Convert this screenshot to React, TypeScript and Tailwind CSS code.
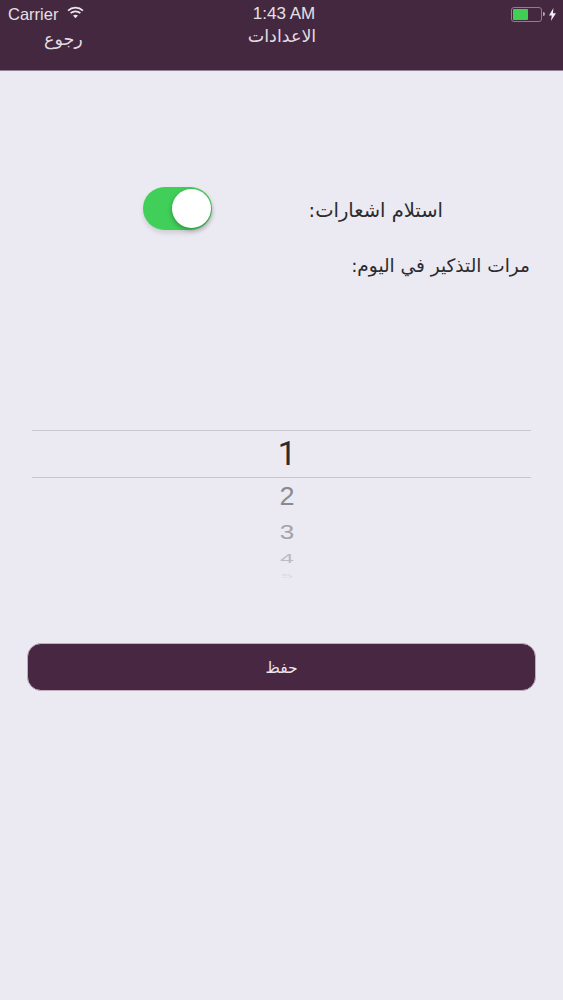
import React from "react";

const arabic = { fontFamily: '"DejaVu Sans", sans-serif' };

function Wifi() {
  return (
    <svg className="-mt-[3px]" width="17" height="13" viewBox="0 0 16 12" fill="none" stroke="#ece6ec" strokeWidth="1.7">
      <path d="M1 4.2C5 .6 11 .6 15 4.2" />
      <path d="M3.4 6.6C6 4.4 10 4.4 12.6 6.6" />
      <path d="M8 11.5L5.7 8.9C7 7.9 9 7.9 10.3 8.9Z" fill="#ece6ec" stroke="none" />
    </svg>
  );
}

function Battery() {
  return (
    <div className="flex items-center">
      <div className="h-[15px] w-[31px] rounded-[3px] border border-[#8d7f8c] p-[1px]">
        <div className="h-full w-[15px] rounded-[1px] bg-[#3fcf55]" />
      </div>
      <div className="ml-[1px] h-[4px] w-[2px] rounded-r-sm bg-[#b5a9b4]" />
      <svg className="ml-[4px]" width="7" height="13" viewBox="0 0 7 13">
        <path d="M4.4 0L0 7.4h2.8L1.9 13 7 5.2H4z" fill="#f1edf1" />
      </svg>
    </div>
  );
}

const pickerRows = [
  { n: "2", cls: "h-[38px] text-[#8b8a90] text-[27px] scale-y-[0.93]" },
  { n: "3", cls: "h-[32px] text-[#a3a2a8] text-[26px] scale-y-[0.78]" },
  { n: "4", cls: "h-[21px] text-[#bcbbc0] text-[25px] scale-y-[0.5]" },
  { n: "5", cls: "h-[14px] text-[#dddce1] text-[22px] scale-y-[0.25]" },
];

export default function App() {
  return (
    <div className="flex min-h-[1000px] w-[563px] flex-col bg-[#ebe9f1]">
      <header className="h-[71px] border-b border-[#8f8399] bg-[#432840]">
        <div className="flex h-[28px] items-center justify-between pl-[8px] pr-[7px] text-[16.5px] text-[#e6e0e6]" style={{ fontFamily: '"Liberation Sans", sans-serif' }}>
          <div className="flex w-[120px] items-center gap-[9px]">
            <span>Carrier</span>
            <Wifi />
          </div>
          <span className="pl-[4px] text-[17px] font-medium">1:43 AM</span>
          <div className="flex w-[120px] justify-end">
            <Battery />
          </div>
        </div>
        <div dir="rtl" className="relative flex h-[16px] items-center justify-center text-[17.5px] text-[#e2dce2]" style={arabic}>
          <span className="ml-[1px]">الاعدادات</span>
          <span className="absolute left-[44px] top-[-2px]">رجوع</span>
        </div>
      </header>

      <main className="flex flex-col">
        <div className="mt-[116px] flex h-[43px] items-center">
          <div className="ml-[143px] flex h-[43px] w-[69px] items-center justify-end rounded-full bg-[#40cf58] pr-[1px] shadow-[0_3px_5px_rgba(0,0,0,0.12)]">
            <div className="h-[39px] w-[39px] rounded-full bg-white shadow-[0_2px_5px_rgba(0,0,0,0.3)]" />
          </div>
          <p dir="rtl" className="ml-[96px] mt-[4px] w-[135px] whitespace-nowrap text-[19.5px] text-[#2b2b2e]" style={arabic}>استلام اشعارات:</p>
        </div>

        <p dir="rtl" className="mr-[33px] mt-[22px] text-[18.5px] leading-[28px] text-[#2b2b2e]" style={arabic}>مرات التذكير في اليوم:</p>

        <div className="mx-[32px] mt-[150px] flex w-[499px] flex-col items-center">
          <div className="flex h-[48px] w-full items-center justify-center border-y border-[#c8c6ce] pl-[11px] text-[33px] font-normal text-[#2c2c30]" style={{ fontFamily: 'Roboto, sans-serif' }}>1</div>
          <div className="flex flex-col items-center pl-[11px]" style={{ fontFamily: '"Liberation Sans", sans-serif' }}>
            {pickerRows.map((r) => (
              <div key={r.n} className={`flex items-center justify-center leading-none ${r.cls}`}>{r.n}</div>
            ))}
          </div>
        </div>

        <button dir="rtl" className="mx-[27px] mt-[60px] h-[48px] w-[509px] rounded-[14px] border border-[#bfadbd] bg-[#472741] pt-[3px] text-[15.5px] text-[#eee4ee]" style={arabic}>حفظ</button>
      </main>
    </div>
  );
}
